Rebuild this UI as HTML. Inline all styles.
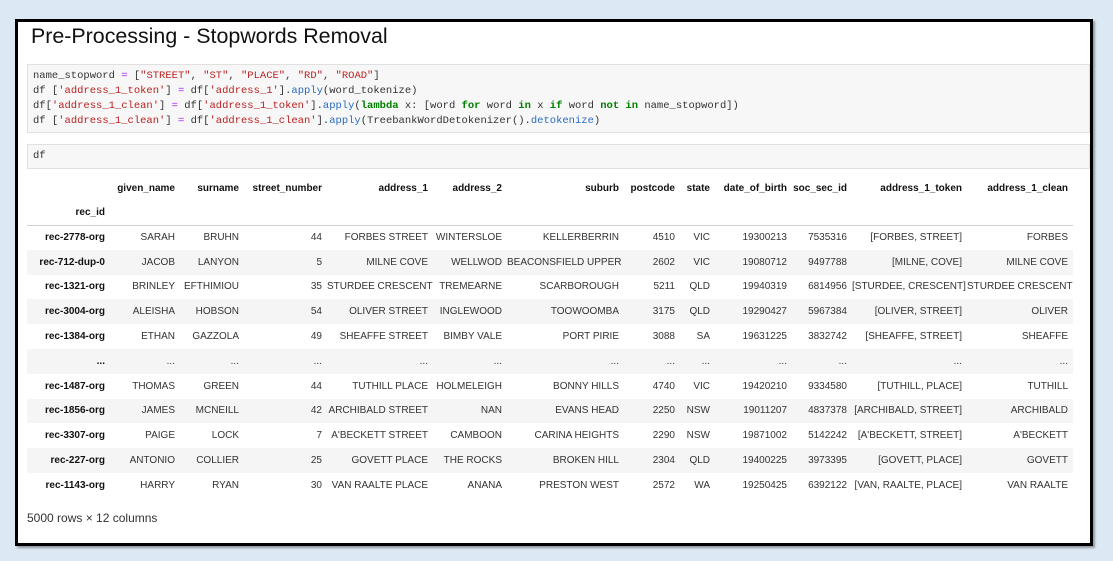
<!DOCTYPE html>
<html><head><meta charset="utf-8"><style>
body{margin:0;width:1113px;height:561px;background:#dde8f5;position:relative;overflow:hidden;font-family:"Liberation Sans",sans-serif;}
.box{position:absolute;left:15px;top:19px;width:1072px;height:521px;background:#fff;border:3px solid #000;box-shadow:2px 2px 2px rgba(0,0,0,.35);}
.title{position:absolute;left:31px;top:24px;font-size:21.4px;color:#111;}
.code{position:absolute;left:27px;width:1063px;background:#f7f7f7;border:1px solid #e0e0e0;box-sizing:border-box;font-family:"Liberation Mono",monospace;font-size:10.5px;line-height:15px;color:#333;padding-left:5px;white-space:pre;}
.s{color:#ba2121}.k{color:#008000;font-weight:bold}.o{color:#aa22ff}.f{color:#2a6bbf}
table{position:absolute;left:27px;top:176px;width:1046px;border-collapse:collapse;table-layout:fixed;font-size:10px;color:#333;}
td,th{text-align:right;padding:0 5px 0 0;white-space:nowrap;overflow:visible;}
th{font-weight:bold;color:#111}
thead tr{height:24.5px}
tbody tr{height:24.8px}
tbody tr:nth-child(even){background:#f5f5f5}
thead tr:last-child th{border-bottom:1.5px solid #d0d0d0}
.foot{position:absolute;left:27px;top:511px;font-size:12px;color:#333}
</style></head><body>
<div class="box"></div>
<div class="title">Pre-Processing - Stopwords Removal</div>
<div class="code" style="top:64px;height:69px;padding-top:4px">name_stopword <span class="o">=</span> [<span class="s">"STREET"</span>, <span class="s">"ST"</span>, <span class="s">"PLACE"</span>, <span class="s">"RD"</span>, <span class="s">"ROAD"</span>]
df [<span class="s">'address_1_token'</span>] <span class="o">=</span> df[<span class="s">'address_1'</span>].<span class="f">apply</span>(word_tokenize)
df[<span class="s">'address_1_clean'</span>] <span class="o">=</span> df[<span class="s">'address_1_token'</span>].<span class="f">apply</span>(<span class="k">lambda</span> x: [word <span class="k">for</span> word <span class="k">in</span> x <span class="k">if</span> word <span class="k">not in</span> name_stopword])
df [<span class="s">'address_1_clean'</span>] <span class="o">=</span> df[<span class="s">'address_1_clean'</span>].<span class="f">apply</span>(TreebankWordDetokenizer().<span class="f">detokenize</span>)</div>
<div class="code" style="top:144px;height:25px;line-height:23px">df</div>
<table>
<colgroup><col style="width:83px"><col style="width:70px"><col style="width:64px"><col style="width:83px"><col style="width:106px"><col style="width:74px"><col style="width:117px"><col style="width:56px"><col style="width:35px"><col style="width:77px"><col style="width:60px"><col style="width:115px"><col style="width:106px"></colgroup>
<thead>
<tr><th></th><th>given_name</th><th>surname</th><th>street_number</th><th>address_1</th><th>address_2</th><th>suburb</th><th>postcode</th><th>state</th><th>date_of_birth</th><th>soc_sec_id</th><th>address_1_token</th><th>address_1_clean</th></tr>
<tr><th>rec_id</th><th></th><th></th><th></th><th></th><th></th><th></th><th></th><th></th><th></th><th></th><th></th><th></th></tr>
</thead>
<tbody>
<tr><th>rec-2778-org</th><td>SARAH</td><td>BRUHN</td><td>44</td><td>FORBES STREET</td><td>WINTERSLOE</td><td>KELLERBERRIN</td><td>4510</td><td>VIC</td><td>19300213</td><td>7535316</td><td>[FORBES, STREET]</td><td>FORBES</td></tr>
<tr><th>rec-712-dup-0</th><td>JACOB</td><td>LANYON</td><td>5</td><td>MILNE COVE</td><td>WELLWOD</td><td>BEACONSFIELD UPPER</td><td>2602</td><td>VIC</td><td>19080712</td><td>9497788</td><td>[MILNE, COVE]</td><td>MILNE COVE</td></tr>
<tr><th>rec-1321-org</th><td>BRINLEY</td><td>EFTHIMIOU</td><td>35</td><td>STURDEE CRESCENT</td><td>TREMEARNE</td><td>SCARBOROUGH</td><td>5211</td><td>QLD</td><td>19940319</td><td>6814956</td><td>[STURDEE, CRESCENT]</td><td>STURDEE CRESCENT</td></tr>
<tr><th>rec-3004-org</th><td>ALEISHA</td><td>HOBSON</td><td>54</td><td>OLIVER STREET</td><td>INGLEWOOD</td><td>TOOWOOMBA</td><td>3175</td><td>QLD</td><td>19290427</td><td>5967384</td><td>[OLIVER, STREET]</td><td>OLIVER</td></tr>
<tr><th>rec-1384-org</th><td>ETHAN</td><td>GAZZOLA</td><td>49</td><td>SHEAFFE STREET</td><td>BIMBY VALE</td><td>PORT PIRIE</td><td>3088</td><td>SA</td><td>19631225</td><td>3832742</td><td>[SHEAFFE, STREET]</td><td>SHEAFFE</td></tr>
<tr><th>...</th><td>...</td><td>...</td><td>...</td><td>...</td><td>...</td><td>...</td><td>...</td><td>...</td><td>...</td><td>...</td><td>...</td><td>...</td></tr>
<tr><th>rec-1487-org</th><td>THOMAS</td><td>GREEN</td><td>44</td><td>TUTHILL PLACE</td><td>HOLMELEIGH</td><td>BONNY HILLS</td><td>4740</td><td>VIC</td><td>19420210</td><td>9334580</td><td>[TUTHILL, PLACE]</td><td>TUTHILL</td></tr>
<tr><th>rec-1856-org</th><td>JAMES</td><td>MCNEILL</td><td>42</td><td>ARCHIBALD STREET</td><td>NAN</td><td>EVANS HEAD</td><td>2250</td><td>NSW</td><td>19011207</td><td>4837378</td><td>[ARCHIBALD, STREET]</td><td>ARCHIBALD</td></tr>
<tr><th>rec-3307-org</th><td>PAIGE</td><td>LOCK</td><td>7</td><td>A'BECKETT STREET</td><td>CAMBOON</td><td>CARINA HEIGHTS</td><td>2290</td><td>NSW</td><td>19871002</td><td>5142242</td><td>[A'BECKETT, STREET]</td><td>A'BECKETT</td></tr>
<tr><th>rec-227-org</th><td>ANTONIO</td><td>COLLIER</td><td>25</td><td>GOVETT PLACE</td><td>THE ROCKS</td><td>BROKEN HILL</td><td>2304</td><td>QLD</td><td>19400225</td><td>3973395</td><td>[GOVETT, PLACE]</td><td>GOVETT</td></tr>
<tr><th>rec-1143-org</th><td>HARRY</td><td>RYAN</td><td>30</td><td>VAN RAALTE PLACE</td><td>ANANA</td><td>PRESTON WEST</td><td>2572</td><td>WA</td><td>19250425</td><td>6392122</td><td>[VAN, RAALTE, PLACE]</td><td>VAN RAALTE</td></tr>
</tbody>
</table>
<div class="foot">5000 rows × 12 columns</div>
</body></html>
